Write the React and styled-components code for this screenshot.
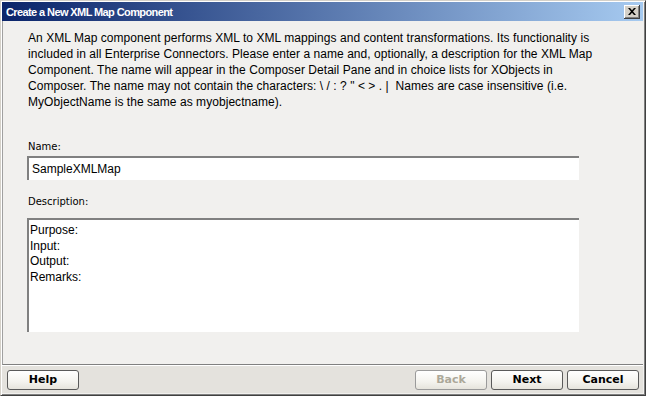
import React, { useState } from "react";
import styled, { createGlobalStyle } from "styled-components";

const GlobalStyle = createGlobalStyle`
    html, body {
        margin: 0;
        padding: 0;
        background: #d4d0c8;
    }
    * {
        box-sizing: border-box;
    }
`;

const App = () => {
    const [name, setName] = useState("SampleXMLMap");
    const [descricao, setDescricao] = useState(
        "Purpose:\nInput:\nOutput:\nRemarks:"
    );

    return (
        <>
            <GlobalStyle />
            <Janela>
                <BarraTitulo>
                    <Titulo>Create a New XML Map Component</Titulo>
                    <Fechar aria-label="Close">
                        <svg width="8" height="7" viewBox="0 0 8 7">
                            <path
                                d="M0 0h2l2 2.3L6 0h2L5 3.5 8 7H6L4 4.7 2 7H0l3-3.5z"
                                fill="#000"
                            />
                        </svg>
                    </Fechar>
                </BarraTitulo>
                <Conteudo>
                    <Texto>
                        An XML Map component performs XML to XML mappings and
                        content transformations. Its functionality is
                        <br />
                        included in all Enterprise Connectors. Please enter a
                        name and, optionally, a description for the XML Map
                        <br />
                        Component. The name will appear in the Composer Detail
                        Pane and in choice lists for XObjects in
                        <br />
                        Composer. The name may not contain the characters: \ /
                        : ? " &lt; &gt; . |&nbsp; Names are case insensitive
                        (i.e.
                        <br />
                        MyObjectName is the same as myobjectname).
                    </Texto>
                    <Campo>
                        <Label>Name:</Label>
                        <Input
                            type="text"
                            value={name}
                            onChange={(e) => setName(e.target.value)}
                        />
                    </Campo>
                    <Campo>
                        <Label $segundo>Description:</Label>
                        <TextArea
                            value={descricao}
                            onChange={(e) => setDescricao(e.target.value)}
                        />
                    </Campo>
                </Conteudo>
                <Rodape>
                    <Botao>Help</Botao>
                    <Grupo>
                        <Botao disabled>Back</Botao>
                        <Botao>Next</Botao>
                        <Botao>Cancel</Botao>
                    </Grupo>
                </Rodape>
            </Janela>
        </>
    );
};

export default App;

const Janela = styled.div`
    width: 646px;
    height: 396px;
    display: flex;
    flex-direction: column;
    background: #f1f0ee;
    border-top: 1px solid #d4d0c8;
    border-left: 1px solid #d4d0c8;
    border-right: 1px solid #404040;
    border-bottom: 1px solid #404040;
    box-shadow: inset 1px 1px 0 #ffffff, inset -1px -1px 0 #808080;
    padding: 1px 2px 2px 1px;
    font-family: "Liberation Sans", Arial, sans-serif;
`;

const BarraTitulo = styled.div`
    height: 19px;
    flex: none;
    display: flex;
    align-items: center;
    justify-content: space-between;
    padding: 0 3px 0 4px;
    background: linear-gradient(to right, #0a246a, #a6caf0);
`;

const Titulo = styled.span`
    color: #ffffff;
    font-family: "Liberation Sans", Tahoma, sans-serif;
    font-weight: bold;
    font-size: 11px;
    letter-spacing: -0.6px;
`;

const Fechar = styled.button`
    width: 16px;
    height: 14px;
    padding: 0;
    display: flex;
    align-items: center;
    justify-content: center;
    background: #d4d0c8;
    border: none;
    box-shadow: inset -1px -1px 0 #404040, inset 1px 1px 0 #ffffff,
        inset -2px -2px 0 #808080;
`;

const Conteudo = styled.div`
    flex: 1;
    display: flex;
    flex-direction: column;
    padding: 9px 66px 0 24px;
    border-left: 1px solid #a0a0a0;
    border-bottom: 1px solid #808080;
`;

const Texto = styled.p`
    margin: 0 0 0 1px;
    font-size: 12px;
    line-height: 16px;
    letter-spacing: 0.05px;
    color: #000;
    width: 600px;
`;

const Campo = styled.div`
    display: flex;
    flex-direction: column;
`;

const Label = styled.label`
    font-family: "DejaVu Sans", Tahoma, sans-serif;
    font-size: 10px;
    color: #000;
    line-height: 12px;
    margin: ${(p) => (p.$segundo ? "16px 0 10px 1px" : "31px 0 3px 1px")};
`;

const Input = styled.input`
    width: 552px;
    height: 24px;
    padding: 0 0 0 3px;
    font-family: "Liberation Sans", Arial, sans-serif;
    font-size: 12px;
    color: #000;
    background: #fff;
    border: none;
    border-top: 2px solid #808080;
    border-left: 2px solid #808080;
    outline: none;
`;

const TextArea = styled.textarea`
    width: 552px;
    height: 114px;
    padding: 3px 0 0 1px;
    resize: none;
    font-family: "Liberation Sans", Arial, sans-serif;
    font-size: 12px;
    line-height: 15.7px;
    color: #000;
    background: #fff;
    border: none;
    border-top: 2px solid #808080;
    border-left: 2px solid #808080;
    outline: none;
    overflow: hidden;
`;

const Rodape = styled.div`
    height: 28px;
    flex: none;
    display: flex;
    align-items: center;
    justify-content: space-between;
    padding: 0 4px 0 5px;
    background: #e4e2dd;
    border-top: 1px solid #ffffff;
`;

const Grupo = styled.div`
    display: flex;
    gap: 4px;
`;

const Botao = styled.button`
    width: 72px;
    height: 20px;
    padding: 0;
    font-family: "DejaVu Sans", Tahoma, sans-serif;
    font-weight: bold;
    font-size: 11px;
    color: #000;
    background: linear-gradient(to bottom, #ffffff, #f4f3ee 60%, #e6e4dc);
    border: 1px solid #5a5a5a;
    border-radius: 3px;
    cursor: pointer;

    &:disabled {
        color: #aca899;
        border-color: #9a9a9a;
        cursor: default;
    }
`;
